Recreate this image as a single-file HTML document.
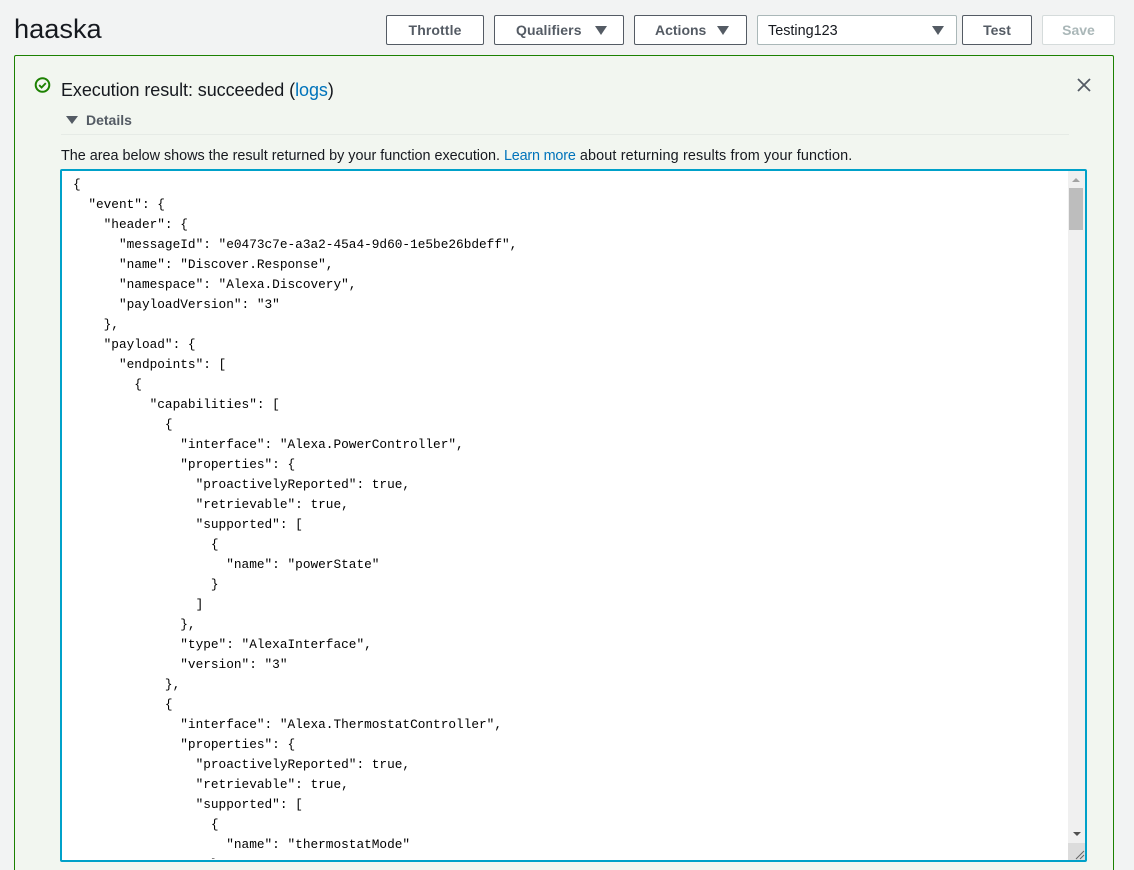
<!DOCTYPE html>
<html>
<head>
<meta charset="utf-8">
<style>
html,body{margin:0;padding:0;width:1134px;height:870px;overflow:hidden;background:#f2f3f3;font-family:"Liberation Sans",sans-serif;color:#16191f}
#w{position:relative;width:1134px;height:870px;overflow:hidden}
.a{position:absolute;white-space:nowrap}
.btn{position:absolute;top:15px;height:28px;box-sizing:content-box;border:1px solid #545b64;border-radius:2px;background:#fff;color:#545b64;font-weight:bold;font-size:14px;line-height:28px;text-align:center}
.tri{position:absolute;width:0;height:0;border-left:6px solid transparent;border-right:6px solid transparent;border-top:9px solid #545b64}
pre{position:absolute;left:73px;top:175px;margin:0;font-family:"Liberation Mono",monospace;font-size:12.78px;line-height:20px;color:#000;height:684px;overflow:hidden;width:990px}
a{color:#0073bb;text-decoration:none}
</style>
</head>
<body>
<div id="w">
<div class="a" style="left:14px;top:11px;font-size:27.2px;line-height:36px;color:#16191f">haaska</div>

<div class="btn" style="left:386px;width:96px;letter-spacing:.1px">Throttle</div>
<div class="btn" style="left:494px;width:128px;text-align:left;text-indent:21px;letter-spacing:.1px">Qualifiers<span class="tri" style="left:100px;top:10px"></span></div>
<div class="btn" style="left:634px;width:111px;text-align:left;text-indent:20px">Actions<span class="tri" style="left:82px;top:10px"></span></div>
<div class="btn" style="left:757px;width:198px;border-color:#aab7b8;color:#16191f;font-weight:normal;font-size:14.4px;line-height:30px;text-align:left;text-indent:10px">Testing123<span class="tri" style="left:174px;top:10px"></span></div>
<div class="btn" style="left:962px;width:68px">Test</div>
<div class="btn" style="left:1042px;width:71px;border-color:#d5dbdb;color:#aab7b8">Save</div>

<div class="a" style="left:14px;top:55px;width:1100px;height:830px;box-sizing:border-box;border:1px solid #1d8102;border-radius:2px;background:#f2f6f0"></div>

<svg class="a" style="left:34px;top:77px" width="17" height="17" viewBox="0 0 17 17"><circle cx="8.5" cy="8" r="6.8" fill="none" stroke="#1d8102" stroke-width="2"/><path d="M5.2 8.1l2.4 2.4 4.2-4.4" fill="none" stroke="#1d8102" stroke-width="1.9"/></svg>
<div class="a" style="left:61px;top:78px;font-size:18px;line-height:24px;letter-spacing:-.07px">Execution result: succeeded (<a>logs</a>)</div>
<svg class="a" style="left:1076px;top:77px" width="16" height="16" viewBox="0 0 16 16"><path d="M2 2l12 12M14 2L2 14" stroke="#545b64" stroke-width="1.8" fill="none"/></svg>

<div class="tri" style="left:66px;top:116px;border-left-width:6px;border-right-width:6px;border-top-width:8px"></div>
<div class="a" style="left:86px;top:111px;font-size:14px;line-height:18px;font-weight:bold;color:#545b64">Details</div>
<div class="a" style="left:61px;top:134px;width:1008px;height:1px;background:#e6ebe6"></div>
<div class="a" style="left:61px;top:147px;font-size:14.4px;line-height:18px;letter-spacing:-.015px">The area below shows the result returned by your function execution. <a style="letter-spacing:-.185px">Learn more</a><span style="letter-spacing:.145px"> about returning results from your function.</span></div>

<div class="a" style="left:60px;top:169px;width:1027px;height:693px;box-sizing:border-box;border:2px solid #00a1c9;border-radius:2px;background:#fff"></div>
<div class="a" style="left:1068px;top:171px;width:17px;height:689px;background:#f0f0f0"></div>
<div class="a" style="left:1069px;top:188px;width:14px;height:42px;background:#bdbdbd"></div>
<div class="tri" style="left:1072px;top:178px;border-left-width:4px;border-right-width:4px;border-top:0;border-bottom:4px solid #a3a3a3"></div>
<div class="tri" style="left:1073px;top:832px;border-left-width:4px;border-right-width:4px;border-top:4px solid #505050"></div>
<div class="a" style="left:1068px;top:843px;width:17px;height:17px;background:#dcdcdc"></div>
<svg class="a" style="left:1068px;top:843px" width="17" height="17"><path d="M8 16L16 8M12 16L16 12" stroke="#666" stroke-width="1" fill="none"/></svg>

<pre>{
  "event": {
    "header": {
      "messageId": "e0473c7e-a3a2-45a4-9d60-1e5be26bdeff",
      "name": "Discover.Response",
      "namespace": "Alexa.Discovery",
      "payloadVersion": "3"
    },
    "payload": {
      "endpoints": [
        {
          "capabilities": [
            {
              "interface": "Alexa.PowerController",
              "properties": {
                "proactivelyReported": true,
                "retrievable": true,
                "supported": [
                  {
                    "name": "powerState"
                  }
                ]
              },
              "type": "AlexaInterface",
              "version": "3"
            },
            {
              "interface": "Alexa.ThermostatController",
              "properties": {
                "proactivelyReported": true,
                "retrievable": true,
                "supported": [
                  {
                    "name": "thermostatMode"
                  },</pre>
</div>
</body>
</html>
